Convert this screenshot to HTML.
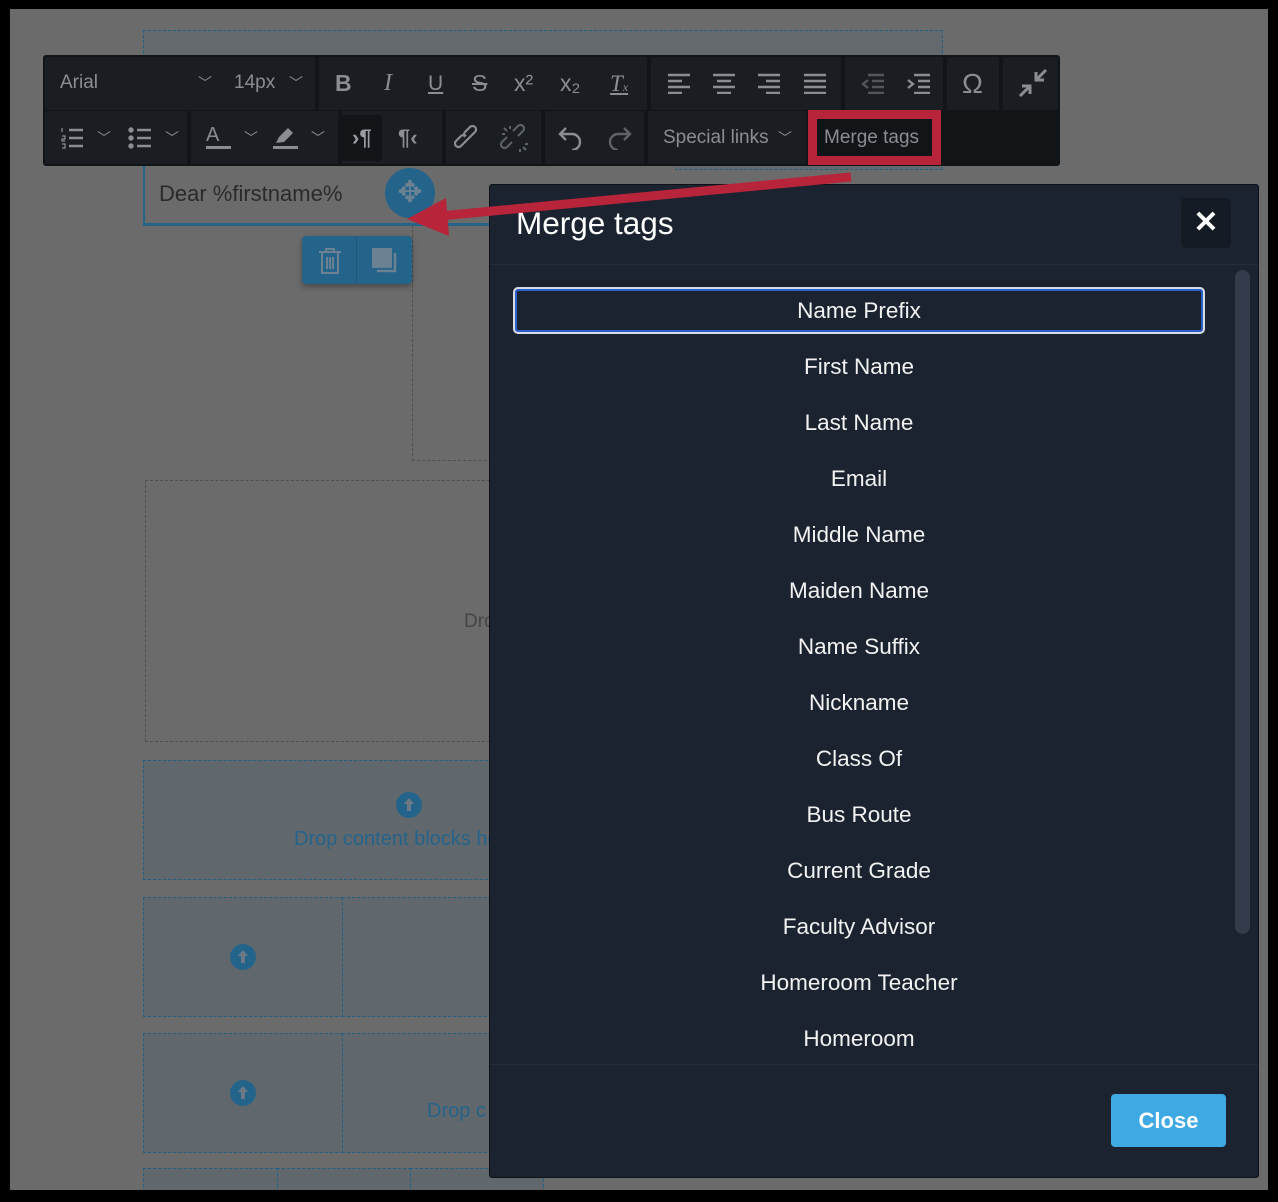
<!DOCTYPE html>
<html><head><meta charset="utf-8"><style>
*{box-sizing:border-box;margin:0;padding:0}
body{width:1278px;height:1202px;background:#000;position:relative;overflow:hidden;font-family:"Liberation Sans",Arial,sans-serif}
.a{position:absolute}
.bg{left:10px;top:9px;width:1258px;height:1181px;background:#6b6b6b;overflow:hidden}
.dg{border:1px dashed #4f4f4f}
.db{border:1px dashed #245f84;background:rgba(60,95,120,0.2)}
.tb{left:43px;top:55px;width:1017px;height:111px;background:#121518;border-radius:3px}
.g{position:absolute;background:#1a1e23;height:53px}
.ic{position:absolute;color:#8a8d91;font-size:20px;line-height:55px;text-align:center}
.item{position:absolute;left:513px;width:692px;text-align:center;color:#f2f2f2;font-size:22.5px;height:46px;line-height:46px}
.up{position:absolute;width:26px;height:26px;border-radius:50%;background:#24638a}
.up:after{content:"";position:absolute;left:8px;top:6px;border:5px solid transparent;border-bottom:6px solid #6b7a84;border-top:0}
.up:before{content:"";position:absolute;left:11px;top:12px;width:4px;height:7px;background:#6b7a84}
</style></head><body>
<div class="a bg">
<div class="a db" style="left:133px;top:21px;width:800px;height:140px;background:rgba(60,95,120,0.15)"></div>
<div class="a dg" style="left:402px;top:216px;width:90px;height:236px"></div>
<div class="a dg" style="left:135px;top:471px;width:360px;height:262px"></div>
<div class="a" style="left:454px;top:602px;font-size:19px;color:#454545">Drop</div>
<div class="a db" style="left:133px;top:751px;width:400px;height:120px"></div>
<div class="up" style="left:386px;top:783px"></div>
<div class="a" style="left:284px;top:819px;font-size:20px;color:#24638a">Drop content blocks here</div>
<div class="a db" style="left:133px;top:888px;width:200px;height:120px"></div>
<div class="a db" style="left:332px;top:888px;width:200px;height:120px"></div>
<div class="up" style="left:220px;top:935px"></div>
<div class="a db" style="left:133px;top:1024px;width:200px;height:120px"></div>
<div class="a db" style="left:332px;top:1024px;width:200px;height:120px"></div>
<div class="up" style="left:220px;top:1071px"></div>
<div class="a" style="left:417px;top:1091px;font-size:20px;color:#24638a">Drop c</div>
<div class="a db" style="left:133px;top:1159px;width:135px;height:40px"></div>
<div class="a db" style="left:267px;top:1159px;width:134px;height:40px"></div>
<div class="a db" style="left:400px;top:1159px;width:134px;height:40px"></div>
</div>
<div class="a" style="left:143px;top:165px;width:532px;height:61px;background:#6b6b6b;border-left:2px solid #24638a;border-bottom:3px solid #24638a"></div>
<div class="a" style="left:159px;top:181px;font-size:22px;color:#2a2a2a">Dear %firstname%</div>
<div class="a" style="left:385px;top:168px;width:50px;height:50px;border-radius:50%;background:#24638a;color:#6a8291;font-size:30px;text-align:center;line-height:50px">✥</div>
<div class="a" style="left:302px;top:236px;width:110px;height:48px;background:#24638a;border-radius:4px;box-shadow:0 3px 6px rgba(0,0,0,.3)"></div>
<div class="a" style="left:356px;top:236px;width:1px;height:48px;background:#1f5575"></div>
<svg class="a" style="left:316px;top:246px" width="28" height="30" viewBox="0 0 28 30" fill="none" stroke="#6a8291" stroke-width="2"><path d="M3 6h22M10 6V3h8v3M6 6v21h16V6M11 11v12M14 11v12M17 11v12"/></svg>
<svg class="a" style="left:370px;top:246px" width="30" height="30" viewBox="0 0 30 30"><rect x="2" y="2" width="20" height="20" fill="#6a8291"/><path d="M25 7v18H7" stroke="#6a8291" stroke-width="2.5" fill="none"/></svg>
<!-- toolbar -->
<div class="a tb">
 <div class="g" style="left:2px;top:2px;width:270px"></div>
 <div class="g" style="left:276px;top:2px;width:328px"></div>
 <div class="g" style="left:608px;top:2px;width:190px"></div>
 <div class="g" style="left:802px;top:2px;width:98px"></div>
 <div class="g" style="left:904px;top:2px;width:52px"></div>
 <div class="g" style="left:960px;top:2px;width:55px"></div>
 <div class="g" style="left:2px;top:56px;width:142px"></div>
 <div class="g" style="left:148px;top:56px;width:147px"></div>
 <div class="g" style="left:299px;top:56px;width:100px"></div>
 <div class="g" style="left:403px;top:56px;width:95px"></div>
 <div class="g" style="left:502px;top:56px;width:99px"></div>
 <div class="g" style="left:605px;top:56px;width:158px"></div>
 <div class="a" style="left:297px;top:60px;width:42px;height:46px;background:#121518;border-radius:3px"></div>
</div>
<div class="a" style="left:60px;top:72px;font-size:19px;color:#8a8d91">Arial</div>
<div class="a" style="left:234px;top:72px;font-size:19px;color:#8a8d91">14px</div>
<div class="ic" style="left:198px;top:56px;font-size:14px">﹀</div>
<div class="ic" style="left:289px;top:56px;font-size:14px">﹀</div>
<div class="ic" style="left:335px;top:56px;font-weight:bold;font-size:23px">B</div>
<div class="ic" style="left:384px;top:56px;font-style:italic;font-family:'Liberation Serif';font-size:24px">I</div>
<div class="ic" style="left:428px;top:56px;text-decoration:underline;font-size:21px">U</div>
<div class="ic" style="left:472px;top:56px;text-decoration:line-through;font-size:23px">S</div>
<div class="ic" style="left:514px;top:56px;font-size:23px">x²</div>
<div class="ic" style="left:560px;top:56px;font-size:23px">x₂</div>
<div class="ic" style="left:610px;top:56px;font-style:italic;font-family:'Liberation Serif';font-size:23px;text-decoration:underline">T<span style="font-size:12px">x</span></div>
<svg class="a" style="left:666px;top:72px" width="170" height="22" stroke="#8a8d91" stroke-width="2.4" fill="none"><path d="M2 3h22M2 9h14M2 15h22M2 21h14"/><path d="M47 3h22M51 9h14M47 15h22M51 21h14"/><path d="M92 3h22M100 9h14M92 15h22M100 21h14"/><path d="M138 3h22M138 9h22M138 15h22M138 21h22"/></svg>
<svg class="a" style="left:860px;top:72px" width="72" height="22" stroke="#8a8d91" stroke-width="2.4" fill="none"><path d="M8 3h16M12 9h12M12 15h12M8 21h16M8 8l-5 4 5 4" opacity=".5"/><path d="M54 3h16M58 9h12M58 15h12M54 21h16M48 8l5 4-5 4"/></svg>
<div class="ic" style="left:962px;top:56px;font-size:28px">Ω</div>
<svg class="a" style="left:1018px;top:68px" width="30" height="30" stroke="#8a8d91" stroke-width="3" fill="none"><path d="M28 2L18 12M18 4v8h8M2 28l10-10M4 18h8v8"/></svg>
<svg class="a" style="left:60px;top:126px" width="24" height="24" stroke="#8a8d91" stroke-width="2.4" fill="none"><path d="M9 4h14M9 12h14M9 20h14"/><path d="M2 2v4M2 10h3v3H2v2h3M2 18h3v4H2" stroke-width="1.2"/></svg>
<div class="ic" style="left:97px;top:111px;font-size:14px">﹀</div>
<svg class="a" style="left:128px;top:126px" width="24" height="24" stroke="#8a8d91" stroke-width="2.4" fill="none"><path d="M9 4h14M9 12h14M9 20h14"/><circle cx="3" cy="4" r="1.5" fill="#8a8d91"/><circle cx="3" cy="12" r="1.5" fill="#8a8d91"/><circle cx="3" cy="20" r="1.5" fill="#8a8d91"/></svg>
<div class="ic" style="left:165px;top:111px;font-size:14px">﹀</div>
<div class="ic" style="left:206px;top:108px;font-size:20px">A</div>
<div class="a" style="left:206px;top:146px;width:25px;height:3px;background:#8a8d91"></div>
<div class="ic" style="left:244px;top:111px;font-size:14px">﹀</div>
<svg class="a" style="left:272px;top:126px" width="28" height="24"><path d="M4 17l3-6 9-9 5 5-9 9z" fill="#8a8d91"/><rect x="1" y="20" width="25" height="3" fill="#8a8d91"/></svg>
<div class="ic" style="left:311px;top:111px;font-size:14px">﹀</div>
<div class="ic" style="left:352px;top:110px;font-size:22px;font-weight:bold;color:#9a9da1">›¶</div>
<div class="ic" style="left:398px;top:110px;font-size:22px;font-weight:bold">¶‹</div>
<svg class="a" style="left:454px;top:125px" width="28" height="28" stroke="#8a8d91" stroke-width="2.2" fill="none"><path d="M12 16l-5 5a3.5 3.5 0 01-5-5l5-5a3.5 3.5 0 015 0M16 12l5-5a3.5 3.5 0 00-5-5l-5 5a3.5 3.5 0 000 5M10 18l8-8"/></svg>
<svg class="a" style="left:500px;top:124px" width="30" height="30" stroke="#5f6266" stroke-width="2" fill="none"><path d="M12 18l-5 5a3.5 3.5 0 01-5-5l5-5M18 12l5-5a3.5 3.5 0 00-5-5l-5 5M4 4l3 3M26 26l-3-3M10 2v3M20 28v-3M2 10h3M28 20h-3"/></svg>
<svg class="a" style="left:558px;top:126px" width="26" height="24" stroke="#8a8d91" stroke-width="2.4" fill="none"><path d="M8 2L2 8l6 6M2 8h12a8 8 0 010 16"/></svg>
<svg class="a" style="left:606px;top:126px" width="26" height="24" stroke="#5f6266" stroke-width="2.4" fill="none"><path d="M18 2l6 6-6 6M24 8H12a8 8 0 000 16"/></svg>
<div class="a" style="left:663px;top:127px;font-size:19px;color:#8a8d91">Special links</div>
<div class="ic" style="left:778px;top:111px;font-size:14px">﹀</div>
<div class="a" style="left:808px;top:110px;width:133px;height:55px;border:9px solid #b8243a;background:#121518"></div>
<div class="a" style="left:824px;top:127px;font-size:19px;color:#8a8d91">Merge tags</div>
<!-- dialog -->
<div class="a" style="left:489px;top:184px;width:770px;height:994px;background:#1c2330;border:1px solid #0e1218;border-radius:3px"></div>
<div class="a" style="left:490px;top:264px;width:768px;height:1px;background:#252d3a"></div>
<div class="a" style="left:490px;top:1064px;width:768px;height:1px;background:#252d3a"></div>
<div class="a" style="left:516px;top:205px;font-size:31.5px;color:#fff">Merge tags</div>
<div class="a" style="left:1181px;top:198px;width:50px;height:50px;background:#151b24;border-radius:4px;color:#fff;font-size:30px;text-align:center;line-height:50px;font-weight:bold">✕</div>
<div class="a" style="left:1235px;top:270px;width:15px;height:664px;background:#333c4a;border-radius:8px"></div>
<div class="a" style="left:513px;top:287px;width:692px;height:47px;border:2px solid #d8dce2;border-radius:5px;box-shadow:inset 0 0 0 2px #2a5fd0"></div>
<div class="item" style="top:288px">Name Prefix</div>
<div class="item" style="top:344px">First Name</div>
<div class="item" style="top:400px">Last Name</div>
<div class="item" style="top:456px">Email</div>
<div class="item" style="top:512px">Middle Name</div>
<div class="item" style="top:568px">Maiden Name</div>
<div class="item" style="top:624px">Name Suffix</div>
<div class="item" style="top:680px">Nickname</div>
<div class="item" style="top:736px">Class Of</div>
<div class="item" style="top:792px">Bus Route</div>
<div class="item" style="top:848px">Current Grade</div>
<div class="item" style="top:904px">Faculty Advisor</div>
<div class="item" style="top:960px">Homeroom Teacher</div>
<div class="item" style="top:1016px">Homeroom</div>
<div class="a" style="left:1111px;top:1094px;width:115px;height:53px;background:#3fa9e3;border-radius:4px;color:#fff;font-weight:bold;font-size:22px;text-align:center;line-height:53px">Close</div>
<svg class="a" style="left:0;top:0" width="1278" height="1202"><path d="M851 177L440 216" stroke="#b8243a" stroke-width="9"/><path d="M407 219L446 198L449 236Z" fill="#b8243a"/></svg>
</body></html>
